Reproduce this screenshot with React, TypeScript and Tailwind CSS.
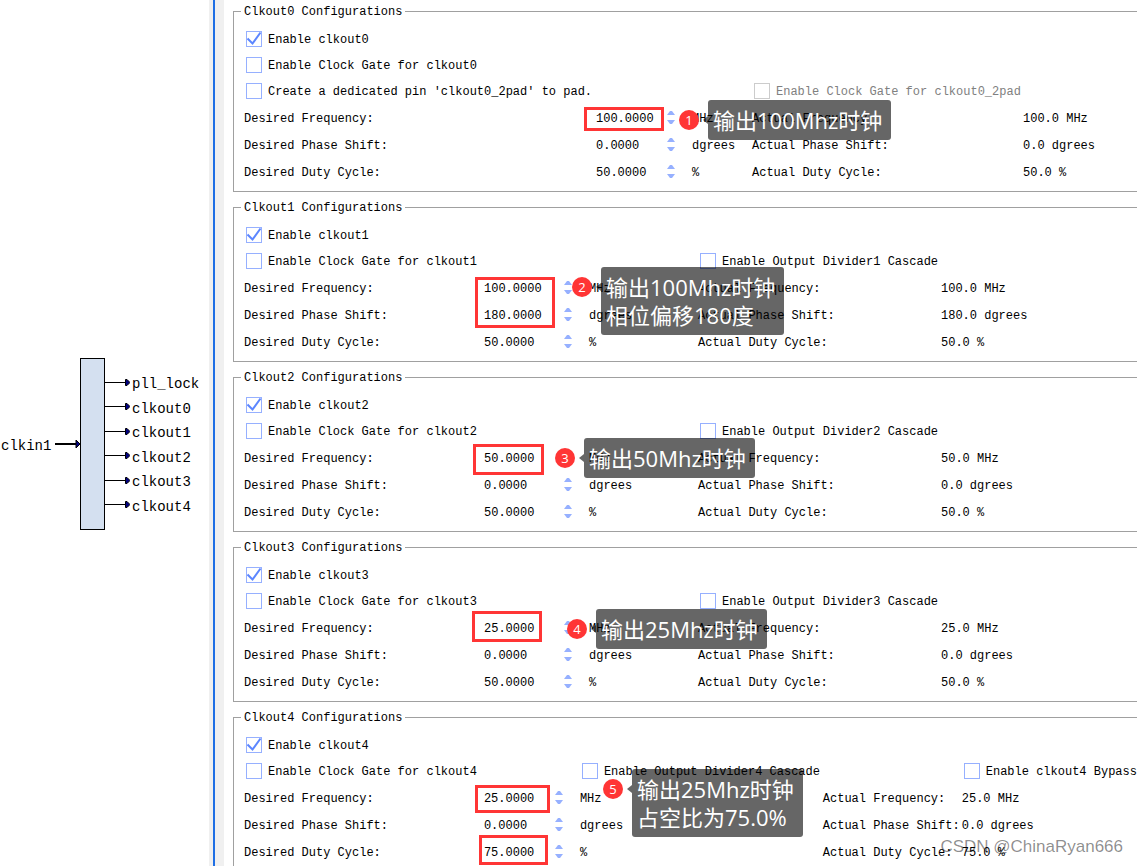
import { useState } from 'react';
import clsx from 'clsx';

interface CheckOption {
  label: string;
  checked?: boolean;
  disabled?: boolean;
  className?: string;
}

interface ValueRow {
  label: string;
  value: string;
  unit: string;
  actualLabel: string;
  actual: string;
}

interface PanelData {
  title: string;
  columns: string;
  checks: CheckOption[];
  rows: ValueRow[];
}

const WIDE_COLUMNS = 'grid-cols-[352fr_96px_60px_271fr_114fr]';
const NORMAL_COLUMNS = 'grid-cols-[240fr_105px_109fr_243fr_196fr]';
const BYPASS_COLUMNS = 'grid-cols-[240fr_96px_243fr_139fr_175fr]';

const makeRows = (frequency: string, phase: string, duty: string): ValueRow[] => [
  {
    label: 'Desired Frequency:',
    value: `${frequency}.0000`,
    unit: 'MHz',
    actualLabel: 'Actual Frequency:',
    actual: `${frequency}.0 MHz`,
  },
  {
    label: 'Desired Phase Shift:',
    value: `${phase}.0000`,
    unit: 'dgrees',
    actualLabel: 'Actual Phase Shift:',
    actual: `${phase}.0 dgrees`,
  },
  {
    label: 'Desired Duty Cycle:',
    value: `${duty}.0000`,
    unit: '%',
    actualLabel: 'Actual Duty Cycle:',
    actual: `${duty}.0 %`,
  },
];

const makeChecks = (n: number): CheckOption[] => [
  { label: `Enable clkout${n}`, checked: true, className: 'col-span-5' },
  { label: `Enable Clock Gate for clkout${n}`, className: 'col-span-3' },
  { label: `Enable Output Divider${n} Cascade`, className: 'col-span-2' },
];

const PANELS: PanelData[] = [
  {
    title: 'Clkout0 Configurations',
    columns: WIDE_COLUMNS,
    checks: [
      { label: 'Enable clkout0', checked: true, className: 'col-span-5' },
      { label: 'Enable Clock Gate for clkout0', className: 'col-span-5' },
      { label: "Create a dedicated pin 'clkout0_2pad' to pad.", className: 'col-span-3' },
      { label: 'Enable Clock Gate for clkout0_2pad', disabled: true, className: 'col-span-2' },
    ],
    rows: makeRows('100', '0', '50'),
  },
  {
    title: 'Clkout1 Configurations',
    columns: NORMAL_COLUMNS,
    checks: makeChecks(1),
    rows: makeRows('100', '180', '50'),
  },
  {
    title: 'Clkout2 Configurations',
    columns: NORMAL_COLUMNS,
    checks: makeChecks(2),
    rows: makeRows('50', '0', '50'),
  },
  {
    title: 'Clkout3 Configurations',
    columns: NORMAL_COLUMNS,
    checks: makeChecks(3),
    rows: makeRows('25', '0', '50'),
  },
  {
    title: 'Clkout4 Configurations',
    columns: BYPASS_COLUMNS,
    checks: [
      { label: 'Enable clkout4', checked: true, className: 'col-span-5' },
      { label: 'Enable Clock Gate for clkout4', className: 'col-span-2' },
      { label: 'Enable Output Divider4 Cascade', className: 'col-span-2' },
      { label: 'Enable clkout4 Bypass' },
    ],
    rows: makeRows('25', '0', '75'),
  },
];

const OUTPUTS = ['pll_lock', 'clkout0', 'clkout1', 'clkout2', 'clkout3', 'clkout4'];

// Highlight frames and notes, placed over the settings area
const FRAMES = [
  'left-[360px] top-[107px] w-[80px] h-[24px]',
  'left-[251px] top-[277px] w-[80px] h-[51px]',
  'left-[249px] top-[444px] w-[71px] h-[31px]',
  'left-[248px] top-[611px] w-[70px] h-[31px]',
  'left-[251px] top-[785px] w-[75px] h-[28px]',
  'left-[255px] top-[835px] w-[69px] h-[30px]',
];

const NOTES = [
  { place: 'left-[455px] top-[100px]', lines: ['输出100Mhz时钟'] },
  { place: 'left-[348px] top-[267px]', lines: ['输出100Mhz时钟', '相位偏移180度'] },
  { place: 'left-[331px] top-[438px]', lines: ['输出50Mhz时钟'] },
  { place: 'left-[343px] top-[609px]', lines: ['输出25Mhz时钟'] },
  { place: 'left-[379px] top-[769px]', lines: ['输出25Mhz时钟', '占空比为75.0%'] },
];

function Checkbox({ label, checked = false, disabled, className }: CheckOption) {
  const [on, setOn] = useState(checked);

  return (
    <label
      className={clsx(
        'flex h-[26px] items-center gap-[6px] pl-[2px]',
        disabled && 'text-[#808080]',
        className
      )}
    >
      <span className="relative h-4 w-4 shrink-0">
        <input
          type="checkbox"
          checked={on}
          disabled={disabled}
          onChange={(e) => setOn(e.target.checked)}
          className="block h-4 w-4 appearance-none border border-[#96b0ff] bg-white disabled:border-[#cccccc]"
        />
        {on && (
          <svg viewBox="0 0 16 16" className="pointer-events-none absolute inset-0 h-4 w-4">
            <path d="M1.5 7.5 L6.5 12.5 L14.5 1.5" fill="none" stroke="#5c86ff" strokeWidth="2" />
          </svg>
        )}
      </span>
      <span className="pt-[2px]">{label}</span>
    </label>
  );
}

function Spinner({ id, initial }: { id: string; initial: string }) {
  const [value, setValue] = useState(initial);
  const step = (delta: number) => setValue((Number(value) + delta).toFixed(4));

  return (
    <div className="flex items-center">
      <input
        id={id}
        type="text"
        value={value}
        onChange={(e) => setValue(e.target.value)}
        className="min-w-0 flex-1 bg-transparent pt-[2px] outline-none"
      />
      <div className="mr-[17px] flex w-2 flex-col gap-[5px]">
        <button type="button" aria-label="Increase" onClick={() => step(1)}>
          <svg viewBox="0 0 8 4" className="block h-1 w-2" fill="#96b0ff">
            <path d="M0 4 L3 0 H5 L8 4 Z" />
          </svg>
        </button>
        <button type="button" aria-label="Decrease" onClick={() => step(-1)}>
          <svg viewBox="0 0 8 4" className="block h-1 w-2" fill="#96b0ff">
            <path d="M0 0 L3 4 H5 L8 0 Z" />
          </svg>
        </button>
      </div>
    </div>
  );
}

function Panel({ title, columns, checks, rows }: PanelData) {
  return (
    <fieldset className="border border-r-0 border-[#a0a0a0] pb-[6px] pl-[10px]">
      <legend className="-ml-[3px] h-4 px-[3px] leading-[18px]">{title}</legend>
      <div className={clsx('grid pt-[7px]', columns)}>
        {checks.map((check) => (
          <Checkbox key={check.label} {...check} />
        ))}
        {rows.map((row) => {
          const id = `${title} ${row.label}`.replace(/\W+/g, '-').toLowerCase();
          return (
            <div key={row.label} className="col-span-5 grid h-[27px] grid-cols-subgrid items-center">
              <label htmlFor={id} className="pt-[2px]">
                {row.label}
              </label>
              <Spinner id={id} initial={row.value} />
              <span className="pt-[2px]">{row.unit}</span>
              <span className="pt-[2px]">{row.actualLabel}</span>
              <span className="pt-[2px]">{row.actual}</span>
            </div>
          );
        })}
      </div>
    </fieldset>
  );
}

function PinDiagram() {
  return (
    <aside className="flex w-[209px] shrink-0 items-center pt-[22px] font-['Liberation_Mono',monospace] text-[14px] leading-5">
      <span className="w-[55px] pl-px pt-[3px]">clkin1</span>
      <svg viewBox="0 0 25 10" className="h-[10px] w-[25px]">
        <path d="M0 5 H22" stroke="#000" strokeWidth="2" />
        <path d="M21 1 L25 5 L21 9 Z" fill="#000080" stroke="#000" />
      </svg>
      <div className="h-[172px] w-[25px] border border-black bg-[#d4e0f0]" />
      <ul className="flex h-[143px] flex-col justify-between">
        {OUTPUTS.map((name) => (
          <li key={name} className="flex h-5 items-center gap-[2px]">
            <svg viewBox="0 0 25 8" className="h-2 w-[25px]">
              <path d="M0 3.5 H21" stroke="#000" />
              <path d="M20.5 0.5 H22 L25 3.5 L22 6.5 H20.5 Z" fill="#000080" stroke="#000" />
            </svg>
            <span className="pt-[3px]">{name}</span>
          </li>
        ))}
      </ul>
    </aside>
  );
}

function Note({ index, place, lines }: { index: number; place: string; lines: string[] }) {
  return (
    <div
      className={clsx(
        "absolute flex items-start font-['Open_Sans','Noto_Sans_CJK_SC',sans-serif] text-white",
        place
      )}
    >
      <span className="mt-[10px] flex h-5 w-5 items-center justify-center rounded-full bg-[#ff3535] text-[13px] leading-5">
        {index}
      </span>
      <svg viewBox="0 0 5 8" className="ml-1 mt-4 h-2 w-[5px]" fill="#000" fillOpacity="0.6">
        <path d="M5 0 L0 4 L5 8 Z" />
      </svg>
      <div className="rounded-[3px] bg-black/60 py-[6px] pl-[5px] pr-[9px] text-[22px] leading-[28px]">
        {lines.map((line) => (
          <p key={line}>{line}</p>
        ))}
      </div>
    </div>
  );
}

export default function App() {
  return (
    <div className="flex h-screen overflow-hidden bg-white text-black">
      <PinDiagram />
      <div className="flex w-[15px] shrink-0 bg-[#f0f0f0] pl-1">
        <div className="w-[2px] bg-[#1f6fe5]" />
      </div>
      <main className="relative flex min-w-0 flex-1 flex-col gap-[7px] whitespace-nowrap pl-[9px] pt-[3px] font-['Liberation_Mono',monospace] text-[12px] leading-4">
        {PANELS.map((panel) => (
          <Panel key={panel.title} {...panel} />
        ))}
        {FRAMES.map((frame) => (
          <div
            key={frame}
            className={clsx('pointer-events-none absolute border-[3px] border-[#ff3535]', frame)}
          />
        ))}
        {NOTES.map((note, i) => (
          <Note key={note.place} index={i + 1} {...note} />
        ))}
        <p className="pointer-events-none absolute bottom-[7px] right-[14px] font-['Liberation_Sans',sans-serif] text-[17px] leading-6 text-black/45">
          CSDN @ChinaRyan666
        </p>
      </main>
    </div>
  );
}
